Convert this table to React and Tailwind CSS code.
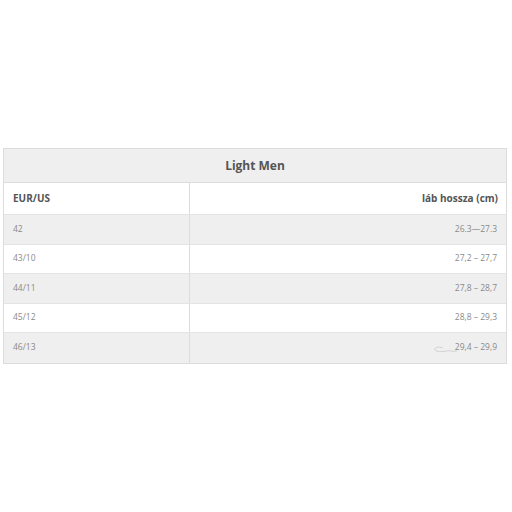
export default function App() {
  const rows = [
    ["42", "26.3—27.3"],
    ["43/10", "27,2 – 27,7"],
    ["44/11", "27,8 – 28,7"],
    ["45/12", "28,8 – 29,3"],
    ["46/13", "29,4 – 29,9"],
  ];
  return (
    <div className="w-[512px] h-[512px] bg-white pt-[148px] pl-[3px]" style={{ fontFamily: '"Open Sans", sans-serif' }}>
      <div className="w-[504px] border border-[#dcdcdc]">
        <div className="h-[34px] bg-[#efefef] border-b border-[#dcdcdc] flex items-center justify-center text-[12px] font-bold text-[#555]">
          Light Men
        </div>
        <div className="flex h-[32px] bg-white border-b border-[#e4e4e4]">
          <div className="w-[186px] border-r border-[#dcdcdc] flex items-center pl-[9px] text-[10px] font-bold text-[#555]">EUR/US</div>
          <div className="flex-1 flex items-center justify-end pr-[8px] text-[10px] font-bold text-[#555]">láb hossza (cm)</div>
        </div>
        {rows.map((r, i) => (
          <div key={i} className={`flex h-[29.5px] ${i % 2 === 0 ? "bg-[#efefef]" : "bg-white"} ${i < rows.length - 1 ? "border-b border-[#e4e4e4]" : ""}`}>
            <div className="w-[186px] border-r border-[#dcdcdc] flex items-center pl-[9px] text-[8.5px] text-[#8a8a8a]">{r[0]}</div>
            <div className="flex-1 flex items-center justify-end pr-[9px] text-[8.5px] text-[#8a8a8a]">
              {i === rows.length - 1 && (
                <svg width="24" height="8" viewBox="0 0 24 8" className="mr-[-2px] mt-[4px]" fill="none" stroke="#c4c4c4" strokeWidth="0.7">
                  <path d="M10 2 C4 0 1 2 2 4 C4 6 9 6 13 5 C16 4 19 6 24 5" />
                </svg>
              )}
              {r[1]}
            </div>
          </div>
        ))}
      </div>
    </div>
  );
}
